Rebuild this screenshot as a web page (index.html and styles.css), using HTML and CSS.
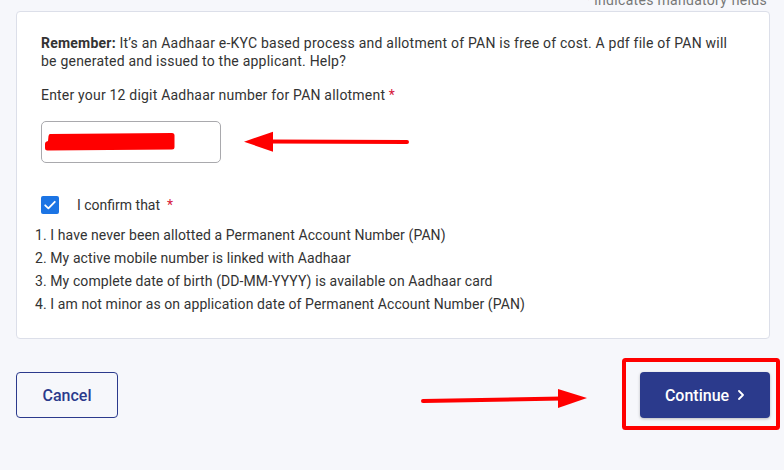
FILE: index.html
```html
<!DOCTYPE html>
<html lang="en">
<head>
<meta charset="utf-8">
<title>PAN allotment</title>
<link rel="stylesheet" href="styles.css">
</head>
<body>
<div class="page">
  <div class="mandatory"><span><span class="req">*</span> indicates mandatory fields</span></div>
  <section class="card">
    <p class="note"><b>Remember:</b> It’s an Aadhaar e-KYC based process and allotment of PAN is free of cost. A pdf file of PAN will be generated and issued to the applicant. Help?</p>
    <label class="label" for="aadhaar">Enter your 12 digit Aadhaar number for PAN allotment <span class="req">*</span></label>
    <input id="aadhaar" class="field" type="text">
    <div class="confirm">
      <span class="check"><svg width="18" height="18" viewBox="0 0 18 18"><path d="M4.2 9.3 L7.4 12.4 L13.8 5.8" fill="none" stroke="#fff" stroke-width="1.8" stroke-linecap="round" stroke-linejoin="round"/></svg></span>
      <span class="confirm-text">I confirm that</span><span class="req star">*</span>
    </div>
    <div class="list">
      <div>1. I have never been allotted a Permanent Account Number (PAN)</div>
      <div>2. My active mobile number is linked with Aadhaar</div>
      <div>3. My complete date of birth (DD-MM-YYYY) is available on Aadhaar card</div>
      <div>4. I am not minor as on application date of Permanent Account Number (PAN)</div>
    </div>
  </section>
  <div class="actions">
    <button class="btn btn-outline" type="button">Cancel</button>
    <button class="btn btn-primary" type="button">Continue <svg class="chev" width="8" height="10" viewBox="0 0 8 10"><path d="M2 1 L6 5 L2 9" fill="none" stroke="#fff" stroke-width="1.8" stroke-linecap="round" stroke-linejoin="round"/></svg></button>
  </div>
</div>
<svg class="annotations" width="784" height="470" viewBox="0 0 784 470">
  <path d="M50 134 L172 133 Q174.5 133 174.5 135.5 L174.5 147 Q174.5 149.5 172 149.5 L47.5 150.5 Q45 150.5 45 148 L45 144 Q45 141.5 48 141 L48.5 136 Q49 134 50 134 Z" fill="#ff0000"/>
  <line x1="407" y1="142" x2="268" y2="141.5" stroke="#ff0000" stroke-width="4" stroke-linecap="round"/>
  <polygon points="244,141.7 273,131.7 273,151.7" fill="#ff0000"/>
  <line x1="423" y1="401" x2="562" y2="398.5" stroke="#ff0000" stroke-width="4" stroke-linecap="round"/>
  <polygon points="587,398 558,389 558,408" fill="#ff0000"/>
  <rect x="624" y="360" width="154" height="68" rx="1.5" fill="none" stroke="#ff0000" stroke-width="4"/>
</svg>
</body>
</html>
```
FILE: styles.css
```css
* { box-sizing: border-box; }
html, body { margin: 0; padding: 0; }
body {
  background: #f6f7fb;
  font-family: Roboto, "Liberation Sans", Arial, sans-serif;
  color: #333;
  font-size: 14px;
  width: 784px;
  height: 470px;
  overflow: hidden;
  position: relative;
}
.page { padding: 0 14px 0 16px; }
.mandatory {
  height: 8px;
  margin-bottom: 3px;
  display: flex;
  justify-content: flex-end;
  align-items: flex-end;
  padding-right: 3px;
  color: #777;
  line-height: 16px;
  letter-spacing: 0.3px;
}
.req { color: #d6173a; }
.card {
  background: #fff;
  border: 1px solid #dcdfe9;
  border-radius: 4px;
  padding: 22px 24px 22px 24px;
  height: 328px;
}
.note { margin: 0; line-height: 18px; letter-spacing: 0.22px; }
.note b { font-weight: 700; color: #333; }
.label { display: block; margin-top: 16px; line-height: 18px; letter-spacing: 0.2px; }
.field {
  display: block;
  margin-top: 17px;
  width: 180px;
  height: 42px;
  border: 1px solid #a9a9ad;
  border-radius: 5px;
  background: #fff;
  outline: none;
}
.confirm {
  margin-top: 33px;
  display: flex;
  align-items: center;
  height: 18px;
  line-height: 18px;
}
.check {
  width: 18px;
  height: 18px;
  border-radius: 2px;
  background: #1b74e4;
  display: flex;
}
.confirm-text { margin-left: 18px; }
.star { margin-left: 7px; }
.list { margin-top: 10px; margin-left: -6px; line-height: 23px; letter-spacing: 0.09px; }
.actions {
  margin-top: 33px;
  display: flex;
  justify-content: space-between;
}
.btn {
  height: 46px;
  border-radius: 4px;
  font-family: Roboto, "Liberation Sans", Arial, sans-serif;
  font-size: 16px;
  font-weight: 500;
  cursor: pointer;
  display: flex;
  align-items: center;
  justify-content: center;
}
.btn-outline {
  width: 102px;
  background: transparent;
  border: 1px solid #2b3a8c;
  color: #2b3a8c;
}
.btn-primary {
  width: 130px;
  background: #2b3a8c;
  border: none;
  color: #fff;
  box-shadow: 0 1px 3px rgba(0,0,0,0.25);
  gap: 8px;
}
.chev { display: block; }
.annotations {
  position: absolute;
  left: 0;
  top: 0;
  pointer-events: none;
}
```
